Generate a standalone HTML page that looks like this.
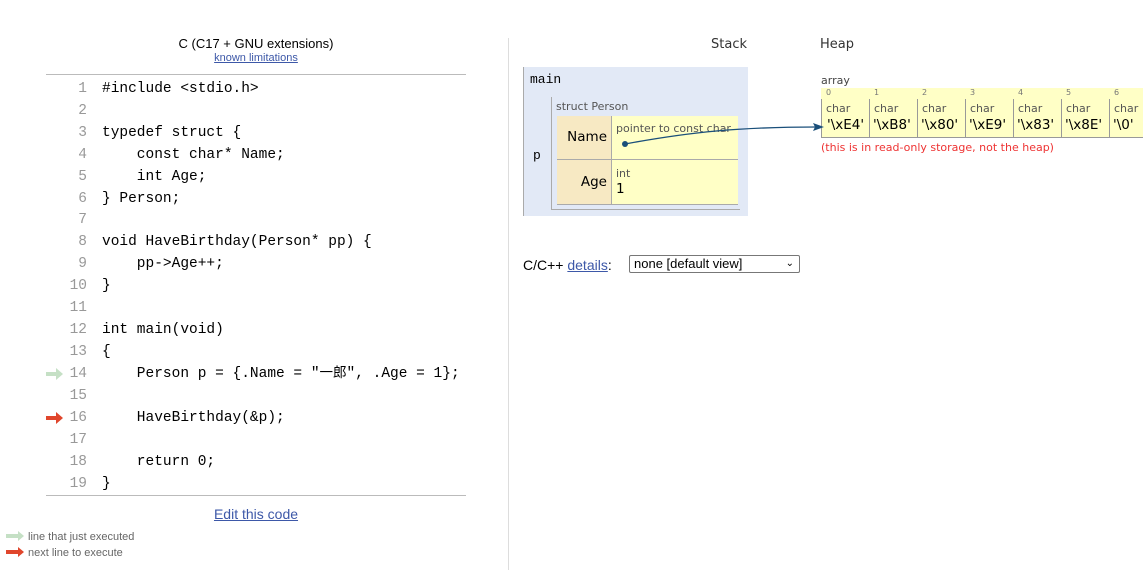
<!DOCTYPE html>
<html><head><meta charset="utf-8"><style>
body{margin:0;width:1143px;height:570px;overflow:hidden;background:#fff;font-family:"Liberation Sans","DejaVu Sans",sans-serif;position:relative}
.a{position:absolute}
.mono{font-family:"Liberation Mono","Noto Sans CJK JP",monospace}
.ln{position:absolute;left:50px;width:37px;text-align:right;color:#999;font-size:14.5px;line-height:18px;height:18px;font-family:"Liberation Mono",monospace}
.cd{position:absolute;left:102px;font-size:14.5px;line-height:18px;height:18px;white-space:pre;color:#000;font-family:"Liberation Mono","Noto Sans CJK JP",monospace}
.cd span{font-size:13.5px}
.cell{position:absolute;top:99px;height:38px;width:47px;border-left:1px solid #999;font-family:"DejaVu Sans",sans-serif}
.cell .t{position:absolute;left:4px;top:3px;font-size:11px;color:#555}
.cell .v{position:absolute;left:3px;top:18px;font-size:13.5px;color:#000}
.idx{position:absolute;top:88px;font-size:8px;color:#777;font-family:"DejaVu Sans",sans-serif}
</style></head><body>
<div class="a" style="left:0;top:36px;width:512px;text-align:center;font-size:13px">C (C17 + GNU extensions)</div>
<div class="a" style="left:0;top:52px;width:512px;text-align:center;font-size:11px;color:#3d58a8;text-decoration:underline">known limitations</div>
<div class="a" style="left:46px;top:74px;width:420px;height:1px;background:#bbb"></div>
<div class="a" style="left:46px;top:495px;width:420px;height:1px;background:#bbb"></div>

<div class="ln" style="top:80px">1</div><div class="cd" style="top:80px">#include &lt;stdio.h&gt;</div>
<div class="ln" style="top:102px">2</div>
<div class="ln" style="top:124px">3</div><div class="cd" style="top:124px">typedef struct {</div>
<div class="ln" style="top:146px">4</div><div class="cd" style="top:146px">    const char* Name;</div>
<div class="ln" style="top:168px">5</div><div class="cd" style="top:168px">    int Age;</div>
<div class="ln" style="top:190px">6</div><div class="cd" style="top:190px">} Person;</div>
<div class="ln" style="top:211px">7</div>
<div class="ln" style="top:233px">8</div><div class="cd" style="top:233px">void HaveBirthday(Person* pp) {</div>
<div class="ln" style="top:255px">9</div><div class="cd" style="top:255px">    pp-&gt;Age++;</div>
<div class="ln" style="top:277px">10</div><div class="cd" style="top:277px">}</div>
<div class="ln" style="top:299px">11</div>
<div class="ln" style="top:321px">12</div><div class="cd" style="top:321px">int main(void)</div>
<div class="ln" style="top:343px">13</div><div class="cd" style="top:343px">{</div>
<div class="ln" style="top:365px">14</div><div class="cd" style="top:365px">    Person p = {.Name = "<span>一郎</span>", .Age = 1};</div>
<div class="ln" style="top:387px">15</div>
<div class="ln" style="top:409px">16</div><div class="cd" style="top:409px">    HaveBirthday(&amp;p);</div>
<div class="ln" style="top:431px">17</div>
<div class="ln" style="top:453px">18</div><div class="cd" style="top:453px">    return 0;</div>
<div class="ln" style="top:475px">19</div><div class="cd" style="top:475px">}</div>

<svg class="a" style="left:46px;top:368px" width="20" height="12"><path d="M0 4h10V0l7 6-7 6V8H0z" fill="#c5e0c5"/></svg>
<svg class="a" style="left:46px;top:412px" width="20" height="12"><path d="M0 4h10V0l7 6-7 6V8H0z" fill="#e0462c"/></svg>

<div class="a" style="left:0;top:506px;width:512px;text-align:center;font-size:14px;color:#3d58a8;text-decoration:underline">Edit this code</div>
<svg class="a" style="left:6px;top:531px" width="20" height="10"><path d="M0 3h12V0l6 5-6 5V7H0z" fill="#c5e0c5"/></svg>
<div class="a" style="left:28px;top:531px;font-size:11px;color:#666">line that just executed</div>
<svg class="a" style="left:6px;top:547px" width="20" height="10"><path d="M0 3h12V0l6 5-6 5V7H0z" fill="#e0462c"/></svg>
<div class="a" style="left:28px;top:547px;font-size:11px;color:#666">next line to execute</div>

<div class="a" style="left:508px;top:38px;width:1px;height:532px;background:#ddd"></div>
<div class="a" style="left:711px;top:37px;font-size:13px;color:#333;font-family:'DejaVu Sans',sans-serif">Stack</div>
<div class="a" style="left:820px;top:37px;font-size:13px;color:#333;font-family:'DejaVu Sans',sans-serif">Heap</div>

<div class="a" style="left:523px;top:67px;width:225px;height:149px;background:#e2e9f6;border-left:1px solid #aaa;box-sizing:border-box"></div>
<div class="a mono" style="left:530px;top:72px;font-size:13px">main</div>
<div class="a mono" style="left:533px;top:148px;font-size:13px">p</div>
<div class="a" style="left:551px;top:97px;width:189px;height:113px;border-left:1px solid #aaa;border-bottom:1px solid #aaa;box-sizing:border-box"></div>
<div class="a" style="left:556px;top:100px;font-size:11px;color:#555;font-family:'DejaVu Sans',sans-serif">struct Person</div>
<div class="a" style="left:557px;top:116px;width:54px;height:43px;background:#f7e9c3"></div>
<div class="a" style="left:612px;top:116px;width:126px;height:43px;background:#ffffc6"></div>
<div class="a" style="left:557px;top:159px;width:181px;height:1px;background:#aaa"></div>
<div class="a" style="left:557px;top:160px;width:54px;height:44px;background:#f7e9c3"></div>
<div class="a" style="left:612px;top:160px;width:126px;height:44px;background:#ffffc6"></div>
<div class="a" style="left:557px;top:204px;width:181px;height:1px;background:#aaa"></div>
<div class="a" style="left:611px;top:116px;width:1px;height:88px;background:#aaa"></div>
<div class="a" style="left:557px;top:129px;width:50px;text-align:right;font-size:13.5px;font-family:'DejaVu Sans',sans-serif">Name</div>
<div class="a" style="left:557px;top:174px;width:50px;text-align:right;font-size:13.5px;font-family:'DejaVu Sans',sans-serif">Age</div>
<div class="a" style="left:616px;top:122px;font-size:11px;color:#555;font-family:'DejaVu Sans',sans-serif">pointer to const char</div>
<div class="a" style="left:616px;top:167px;font-size:11px;color:#555;font-family:'DejaVu Sans',sans-serif">int</div>
<div class="a" style="left:616px;top:181px;font-size:13.5px;font-family:'DejaVu Sans',sans-serif">1</div>

<div class="a" style="left:821px;top:74px;font-size:11px;color:#444;font-family:'DejaVu Sans',sans-serif">array</div>
<div class="a" style="left:821px;top:88px;width:322px;height:49px;background:#ffffc6;border-bottom:1px solid #999"></div>
<div class="idx" style="left:826px">0</div><div class="idx" style="left:874px">1</div><div class="idx" style="left:922px">2</div><div class="idx" style="left:970px">3</div><div class="idx" style="left:1018px">4</div><div class="idx" style="left:1066px">5</div><div class="idx" style="left:1114px">6</div>
<div class="cell" style="left:821px"><div class="t">char</div><div class="v" style="left:5px">'\xE4'</div></div>
<div class="cell" style="left:869px"><div class="t">char</div><div class="v">'\xB8'</div></div>
<div class="cell" style="left:917px"><div class="t">char</div><div class="v">'\x80'</div></div>
<div class="cell" style="left:965px"><div class="t">char</div><div class="v">'\xE9'</div></div>
<div class="cell" style="left:1013px"><div class="t">char</div><div class="v">'\x83'</div></div>
<div class="cell" style="left:1061px"><div class="t">char</div><div class="v">'\x8E'</div></div>
<div class="cell" style="left:1109px"><div class="t">char</div><div class="v">'\0'</div></div>
<div class="a" style="left:821px;top:141px;font-size:11px;color:#e33;font-family:'DejaVu Sans',sans-serif">(this is in read-only storage, not the heap)</div>

<svg class="a" style="left:0;top:0" width="1143" height="570">
<circle cx="625" cy="144" r="3" fill="#1a4f7a"/>
<path d="M625 144 C690 132,740 127,816 127" fill="none" stroke="#1a4f7a" stroke-width="1.3"/>
<path d="M824 127 l-11 -4 l2 4 l-2 4z" fill="#1a4f7a"/>
</svg>

<div class="a" style="left:523px;top:257px;font-size:14px">C/C++ <span style="color:#3d58a8;text-decoration:underline">details</span>:</div>
<div class="a" style="left:629px;top:255px;width:171px;height:18px;border:1px solid #777;border-radius:2px;box-sizing:border-box;font-size:13px;padding-left:4px;line-height:16px">none [default view]<span style="position:absolute;right:5px;top:0;font-size:10px">&#8964;</span></div>
</body></html>
